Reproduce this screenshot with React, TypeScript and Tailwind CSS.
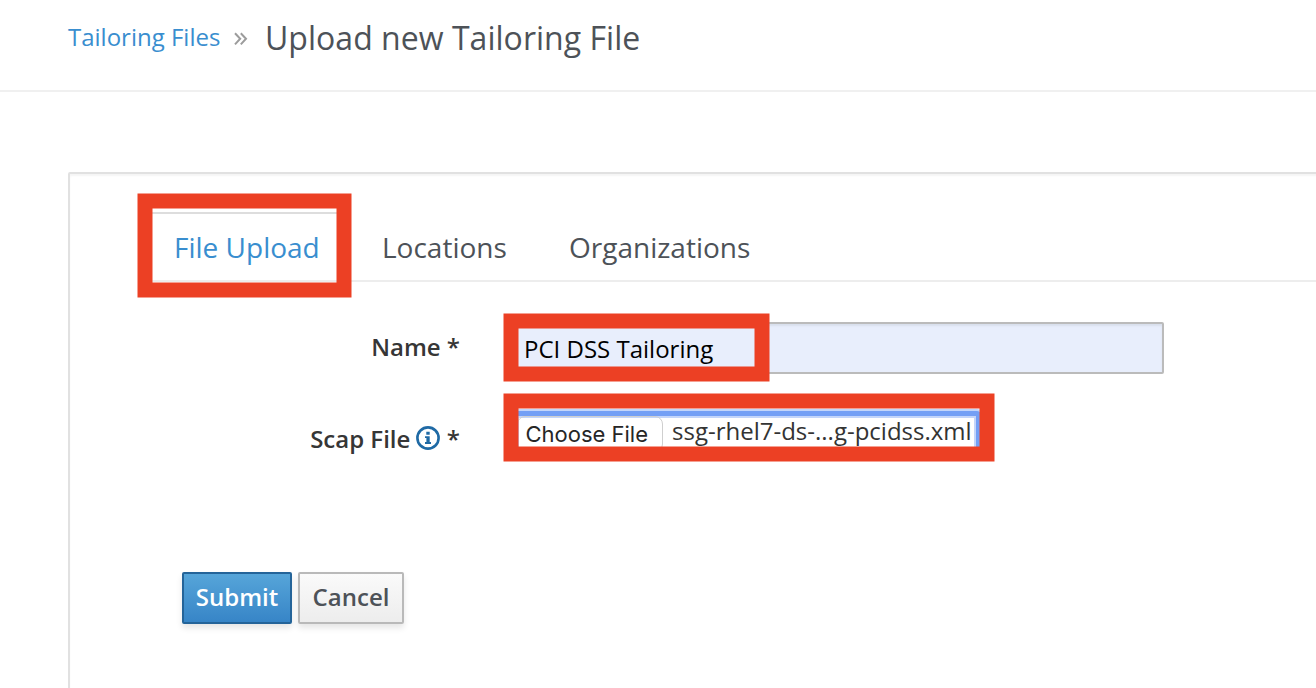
import type { ReactNode } from "react";

function Highlight({
  width,
  height,
  className,
}: {
  width: number;
  height: number;
  className: string;
}) {
  return (
    <svg
      width={width + 1}
      height={height + 1}
      className={`pointer-events-none absolute ${className}`}
      fill="none"
    >
      <rect
        x="8"
        y="8"
        width={width - 15}
        height={height - 15}
        stroke="#ec4024"
        strokeWidth="15"
      />
    </svg>
  );
}

function InfoIcon() {
  return (
    <svg viewBox="0 0 24 24" className="mr-px mb-[2px] -ml-px h-6 w-6" fill="none">
      <circle cx="12" cy="12" r="10.6" stroke="#1f6aa5" strokeWidth="2.6" />
      <path
        d="M10.3 5.8h3.4v2.9h-3.4zM9 10.2h4.7v5.9H15V18H9v-1.9h1.4v-4H9z"
        fill="#1f6aa5"
      />
    </svg>
  );
}

function Label({ children }: { children: ReactNode }) {
  return (
    <label className="flex w-[390px] shrink-0 items-center justify-end whitespace-pre text-[24px] leading-8 font-semibold text-[#363636]">
      {children}
    </label>
  );
}

export default function App() {
  return (
    <div className="h-[688px] w-[1316px] overflow-hidden bg-white font-['Open_Sans',sans-serif]">
      <header className="flex h-[92px] items-start border-b-2 border-[#f0f0f0] pl-[68px]">
        <a className="mt-[21px] w-[166px] whitespace-nowrap text-[24px] leading-8 text-[#398ecf]">
          Tailoring Files
        </a>
        <svg
          viewBox="0 0 14 14"
          className="mt-8 h-[14px] w-[14px]"
          fill="none"
          stroke="#9c9c9c"
          strokeWidth="2"
        >
          <path d="M1 1.2 6.2 6.8 1 12.4M6.8 1.2 12 6.8 6.8 12.4" />
        </svg>
        <h1 className="mt-[18px] ml-[17px] whitespace-nowrap text-[32px] leading-10 tracking-[0.03px] text-[#4d5258]">
          Upload new Tailoring File
        </h1>
      </header>

      <main className="pt-20 pl-[68px]">
        <section className="relative h-[600px] w-[1400px] rounded-[2px] border-2 border-[#e1e1e1] shadow-[inset_0_2px_2px_#f5f5f5]">
          <nav className="ml-[82px] flex h-[108px] items-end border-b-2 border-[#ededed] text-[28px] leading-10 text-[#4d5258]">
            <div className="h-[68px] w-[185px] border-t-2 border-[#dddddd] pt-[13px] pl-[22px] whitespace-nowrap text-[#398ecf]">
              File Upload
            </div>
            <div className="h-[68px] w-[187px] pt-[15px] pl-[45px] whitespace-nowrap">Locations</div>
            <div className="h-[68px] pt-[15px] pl-[45px] whitespace-nowrap">Organizations</div>
          </nav>

          <form>
            <div className="mt-10 flex h-[52px] items-start">
              <div className="pt-[9px]">
                <Label>Name *</Label>
              </div>
              <div className="ml-[48px] flex h-[52px] w-[656px] items-center rounded-[2px] border-2 border-[#bbbbbb] bg-[#e8eefc] pt-[2px] pl-[14px] text-[24px] leading-8 whitespace-nowrap text-black shadow-[inset_0_2px_2px_#d9dfec]">
                PCI DSS Tailoring
              </div>
            </div>

            <div className="mt-[37px] flex h-[44px] items-start">
              <div className="mt-[12px]">
                <Label>
                  <span>Scap File </span>
                  <InfoIcon />
                  <span> *</span>
                </Label>
              </div>
              <div className="ml-[52px] flex h-[46px] w-[469px] items-start rounded-[4px] border-[5px] border-[#739ff5] shadow-[0_0_0_2px_#c3d5fa,inset_0_0_0_2px_#c3d5fa]">
                <div className="flex h-[36px] w-[146px] items-center justify-end rounded-[8px] border border-[#cfcfcf] pr-[14px] font-['Inter',sans-serif] text-[22px] whitespace-nowrap text-[#262626]">
                  Choose File
                </div>
                <div className="-mt-px pl-[9px] text-[24px] leading-8 whitespace-nowrap text-[#333333]">
                  ssg-rhel7-ds-...g-pcidss.xml
                </div>
              </div>
            </div>

            <div className="mt-[117px] ml-[112px] flex gap-[6px] text-[24px] leading-8 font-semibold">
              <button
                type="button"
                className="h-[52px] w-[110px] rounded-[2px] border-2 border-[#246499] bg-linear-to-b from-[#56a5d9] to-[#3785c7] pb-[2px] text-white shadow-[0_4px_6px_rgba(3,3,3,0.1)]"
              >
                Submit
              </button>
              <button
                type="button"
                className="h-[52px] w-[106px] rounded-[2px] border-2 border-[#b9b9b9] bg-linear-to-b from-[#fafafa] to-[#ededed] pb-[2px] text-[#4d5258] shadow-[0_4px_6px_rgba(3,3,3,0.1)]"
              >
                Cancel
              </button>
            </div>
          </form>

          <Highlight width={214} height={104} className="top-[19px] left-[67px]" />
          <Highlight width={266} height={68} className="top-[139px] left-[433px]" />
          <Highlight width={491} height={68} className="top-[219px] left-[433px]" />
        </section>
      </main>
    </div>
  );
}
